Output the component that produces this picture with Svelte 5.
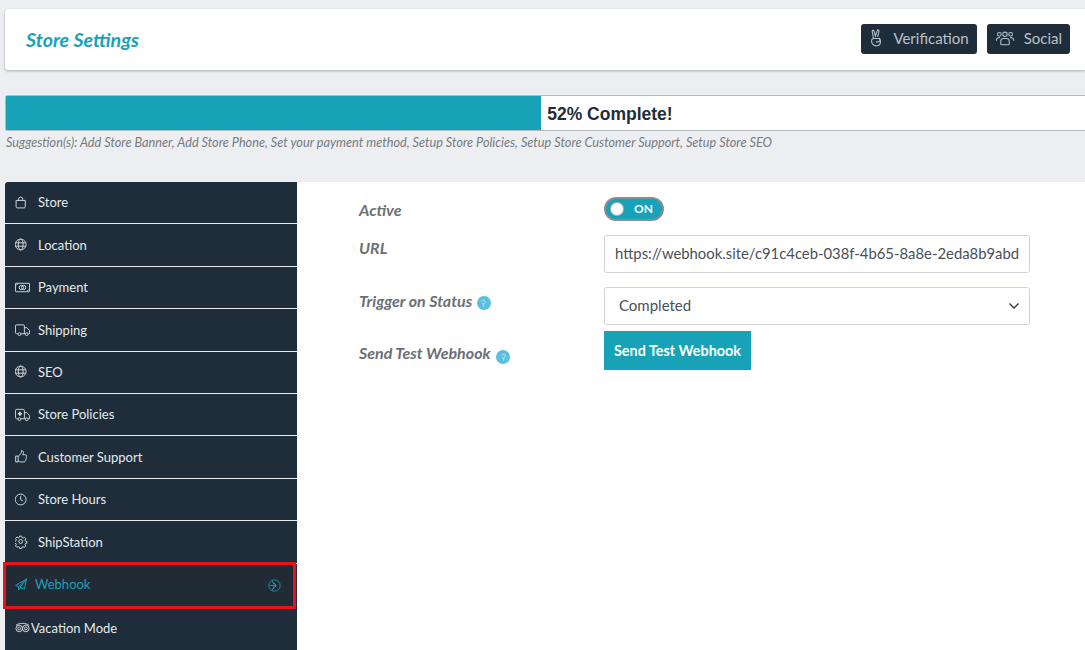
<script>
  const menu = [
    { name: "Store", icon: "bag", small: true },
    { name: "Location", icon: "globe", small: true },
    { name: "Payment", icon: "money" },
    { name: "Shipping", icon: "truck" },
    { name: "SEO", icon: "globe", small: true },
    { name: "Store Policies", icon: "ambulance" },
    { name: "Customer Support", icon: "thumb", small: true },
    { name: "Store Hours", icon: "clock", small: true },
    { name: "ShipStation", icon: "gear", small: true },
    { name: "Webhook", icon: "plane", small: true, active: true },
    { name: "Vacation Mode", icon: "trip", tight: true }
  ];
</script>

{#snippet icon(name, small)}
  <svg
    class="ico"
    viewBox={small ? "1.2 -1 18 18" : "0 0 16 16"}
    preserveAspectRatio="xMinYMid"
    fill="none"
    stroke="currentColor"
    stroke-width={small ? 1.15 : 1}
  >
    {#if name === "bag"}
      <path d="M2.5 5.5h11v7.5a1.5 1.5 0 0 1-1.5 1.5H4a1.500 1.500 0 0 1-1.500-1.500z" />
      <path d="M5.500 5.500V4a2.500 2.500 0 0 1 5 0v1.500" />
    {:else if name === "globe"}
      <circle cx="8" cy="8" r="6.500" />
      <ellipse cx="8" cy="8" rx="2.900" ry="6.500" />
      <path d="M2 6h12M2 10h12" />
    {:else if name === "money"}
      <rect x="0.500" y="3.500" width="15" height="9" rx="0.500" />
      <circle cx="6.800" cy="8" r="2.300" />
      <circle cx="9.200" cy="8" r="2.300" />
      <path d="M1 6l2-2M15 10l-2 2" />
    {:else if name === "truck"}
      <path d="M3 12.500H1.800A1.300 1.300 0 0 1 .5 11.200V4.300A1.300 1.300 0 0 1 1.800 3h7A1.300 1.300 0 0 1 10 4.300v8.200H6.500" />
      <path d="M10 6h2.500l3 3v3.500h-1.200M10 12.500h.8" />
      <circle cx="4.800" cy="13" r="1.500" />
      <circle cx="12.500" cy="13" r="1.500" />
    {:else if name === "ambulance"}
      <path d="M3 12.500H1.800A1.300 1.300 0 0 1 .5 11.200V3.800A1.300 1.300 0 0 1 1.800 2.500h7A1.300 1.300 0 0 1 10 3.800v8.700H6.500" />
      <path d="M10 6h2.500l3 3v3.500h-1.200M10 12.500h.8" />
      <circle cx="4.800" cy="13" r="1.500" />
      <circle cx="12.500" cy="13" r="1.500" />
      <path d="M5.200 5v4.400M3 7.200h4.400" stroke-width="1.800" />
    {:else if name === "thumb"}
      <path d="M2 7.500h3v7H2z" />
      <path d="M5 8l3-3.500c.8-1 1-2 1-3.500 1.500 0 2.300 1 2.300 2.300 0 1-.5 2-.8 2.700h3.300c1.500 0 1.800 1.700.8 2.500.6.800.4 1.800-.3 2.300.3 1 0 1.800-.7 2.100.1 1.100-.6 1.600-1.600 1.600H8.500c-1.400 0-2.300-.5-3.500-1" />
    {:else if name === "clock"}
      <circle cx="8" cy="8" r="6.500" />
      <path d="M8 4v4.300l2.700 1.500" />
    {:else if name === "gear"}
      <circle cx="8" cy="8" r="2.300" />
      <path d="M6.800 1.500h2.400l.4 1.800 1.300.6 1.700-.9 1.600 1.700-1 1.600.5 1.300 1.800.4v2l-1.800.5-.5 1.300.9 1.600-1.600 1.700-1.600-.9-1.400.6-.3 1.700H6.800l-.4-1.800-1.300-.6-1.700.9-1.600-1.600 1-1.700-.5-1.300-1.800-.5V7.700l1.800-.4.5-1.300-.9-1.700 1.600-1.700 1.700.9 1.300-.6z" />
    {:else if name === "plane"}
      <path d="M15 1.500L2 9l3.500 1.500zM15 1.500l-8 10 5.500 2zM5.500 10.500v4L8 12" stroke-linejoin="round" />
    {:else if name === "trip"}
      <circle cx="4.500" cy="9" r="3.500" />
      <circle cx="11.500" cy="9" r="3.500" />
      <circle cx="4.500" cy="9" r="1.500" />
      <circle cx="11.500" cy="9" r="1.500" />
      <path d="M1 5.500c4-2.500 10-2.500 14 0" />
    {/if}
  </svg>
{/snippet}

{#snippet help()}
  <span class="help">
    <svg viewBox="0 0 16 16" fill="none" stroke="#cfeaf4" stroke-width="1.200">
      <path d="M5.500 7a2.500 2.500 0 1 1 4.500 1.500c-.7.7-1 1-1 2H7c0-1-.3-1.300-1-2" />
      <path d="M7 12h2M7.300 13.500h1.400" />
    </svg>
  </span>
{/snippet}

<div class="page">
  <header class="head">
    <h1>Store Settings</h1>
    <div class="head-btns">
      <button class="dark">
        <svg class="btn-ico narrow" viewBox="0 0 12 18" fill="none" stroke="currentColor" stroke-width="1.100">
          <path d="M3 9L1.700 2.500c-.2-1.300 1.500-1.500 1.800-.4L5 7 6.800 1.600c.4-1.200 2-.7 1.700.5L7.200 8" />
          <path d="M2.500 9.500h5.300c1.500 0 2 1.500 1.200 2.500-.8 1-2.500 1-3.500.5M2.500 9.500c-1.800.8-1.700 3.300-.8 5 .8 1.500 2.500 2.500 4.500 2.300 2-.2 3.800-2 3.800-4.300 0-1-.3-2.500-1.300-3.500" />
        </svg>
        Verification
      </button>
      <button class="dark">
        <svg class="btn-ico" viewBox="0 0 20 16" fill="none" stroke="currentColor" stroke-width="1.100">
          <circle cx="4" cy="3.500" r="2" />
          <circle cx="10" cy="3.500" r="2.300" />
          <circle cx="16" cy="3.500" r="2" />
          <path d="M.7 10.500c0-2 1-3.200 2.500-3.200h1.500M19.300 10.500c0-2-1-3.200-2.500-3.200h-1.500" />
          <path d="M5.500 13.800V11c0-1.800 1.200-3 2.800-3h3.400c1.600 0 2.800 1.200 2.800 3v2.800c0 .5-.3.800-.8.800H6.300c-.5 0-.8-.3-.8-.8z" />
        </svg>
        Social
      </button>
    </div>
  </header>

  <section class="progress">
    <div class="bar" style="width: 49.600%"></div>
    <span class="pct">52% Complete!</span>
  </section>
  <p class="hint">Suggestion(s): Add Store Banner, Add Store Phone, Set your payment method, Setup Store Policies, Setup Store Customer Support, Setup Store SEO</p>

  <div class="main">
    <nav class="side">
      {#each menu as item}
        <a class="item" class:active={item.active} class:tight={item.tight} href="#top">
          {@render icon(item.icon, item.small)}
          <span>{item.name}</span>
          {#if item.active}
            <svg class="arrow" viewBox="0 0 16 16" fill="none" stroke="currentColor" stroke-width="1">
              <circle cx="8" cy="8" r="7" />
              <path d="M2 8h8M7 4.500L10.500 8 7 11.500M5 2l3 6M5 14l3-6" />
            </svg>
          {/if}
        </a>
      {/each}
    </nav>

    <div class="content">
      <div class="row r-active">
        <span class="label">Active</span>
        <div class="toggle">
          <span class="knob"></span>
          <span class="on">ON</span>
        </div>
      </div>
      <div class="row r-url">
        <span class="label">URL</span>
        <input class="field" type="text" value="https://webhook.site/c91c4ceb-038f-4b65-8a8e-2eda8b9abd1f" />
      </div>
      <div class="row r-status">
        <span class="label">Trigger on Status {@render help()}</span>
        <div class="select-wrap">
          <select class="field sel">
            <option>Completed</option>
          </select>
          <svg class="chev" viewBox="0 0 12 8" fill="none" stroke="#343a40" stroke-width="1.400">
            <path d="M1.500 1.500L6 6l4.500-4.500" />
          </svg>
        </div>
      </div>
      <div class="row r-test">
        <span class="label">Send Test Webhook {@render help()}</span>
        <button class="send">Send Test Webhook</button>
      </div>
    </div>
  </div>
</div>

<style>
  :global(body) {
    margin: 0;
    background: #eceef2;
    overflow: hidden;
  }

  .page {
    width: 1085px;
    height: 650px;
    overflow: hidden;
    font-family: Lato, "Liberation Sans", sans-serif;
    padding: 9px 0 0 5px;
    box-sizing: border-box;
  }

  .head {
    height: 61px;
    background: #fff;
    border-radius: 3px 0 0 3px;
    box-shadow: 0 1px 3px rgba(0, 0, 0, 0.28);
    display: flex;
    align-items: center;
    justify-content: space-between;
    padding: 0 15px 0 21px;
  }

  h1 {
    margin: 0;
    font-size: 19.6px;
    font-style: italic;
    font-weight: 700;
    color: #17a2b8;
  }

  .head-btns {
    display: flex;
    gap: 10px;
    margin-top: -1px;
  }

  .dark {
    height: 30px;
    padding: 0 8px 2px;
    border: 0;
    border-radius: 3px;
    background: #1f2d3a;
    color: #b8c2cb;
    font: 15px Lato, "Liberation Sans", sans-serif;
    display: flex;
    align-items: center;
    gap: 9px;
  }

  .btn-ico {
    width: 20px;
    height: 15px;
  }

  .btn-ico.narrow {
    width: 13px;
    height: 18px;
    margin: 0 1px;
  }

  .progress {
    margin-top: 25px;
    height: 36px;
    background: #fff;
    border: 1px solid #b5b9bd;
    border-right: 0;
    border-radius: 3px 0 0 3px;
    box-sizing: border-box;
    display: flex;
    align-items: center;
  }

  .bar {
    height: 100%;
    background: #17a2b8;
  }

  .pct {
    margin: 3px 0 0 6px;
    font: 700 17.5px "Liberation Sans", Arial, sans-serif;
    color: #1f2d3a;
  }

  .hint {
    margin: 4px 0 0 1px;
    font-size: 12.7px;
    line-height: 14px;
    font-style: italic;
    color: #767b80;
    white-space: nowrap;
  }

  .main {
    margin-top: 33px;
    display: flex;
    height: 468px;
    background: #fff;
  }

  .side {
    width: 292px;
    flex: none;
    background: #1f2d3a;
    border-radius: 3px 0 0 0;
  }

  .item {
    height: 42.4px;
    box-sizing: border-box;
    border-bottom: 1px solid #e9ecef;
    display: flex;
    align-items: center;
    padding: 0 0 0.6px 10px;
    color: #e5e9ec;
    font-size: 13px;
    text-decoration: none;
  }

  .item .ico {
    width: 15px;
    height: 15px;
    flex: none;
    margin-right: 8px;
    color: #d5dadf;
  }

  .item.active {
    color: #17a2b8;
    border-bottom: 0;
    outline: 3px solid #e8121c;
    outline-offset: -2px;
    margin-right: 2px;
    margin-left: -1px;
    padding: 0 0 2px 11px;
    height: 45px;
    margin-top: -1px;
    margin-bottom: -1px;
    position: relative;
    background: #212b36;
  }

  .item.active .ico {
    color: #17a2b8;
    margin-right: 5px;
  }

  .item.tight {
    border-bottom: 0;
    padding-top: 1px;
  }

  .item.tight .ico {
    margin-right: 1px;
  }

  .arrow {
    width: 13px;
    height: 13px;
    margin-left: auto;
    margin-right: 14px;
    margin-top: 2px;
  }

  .content {
    flex: 1;
    position: relative;
    padding-left: 62px;
  }

  .row {
    display: flex;
  }

  .label {
    width: 245px;
    flex: none;
    font-size: 16px;
    font-style: italic;
    font-weight: 700;
    color: #6b6f73;
    white-space: nowrap;
  }

  .r-active {
    height: 53px;
  }

  .r-active .label {
    padding-top: 18px;
  }

  .r-url {
    height: 52px;
  }

  .r-url .label {
    padding-top: 3px;
  }

  .r-status {
    height: 44px;
  }

  .r-status .label {
    padding-top: 4px;
  }

  .r-test .label {
    padding-top: 12px;
  }

  .toggle {
    width: 56px;
    height: 20px;
    border-radius: 12px;
    background: #17a2b8;
    border: 2px solid #868e96;
    margin-top: 15px;
    display: flex;
    align-items: center;
  }

  .knob {
    width: 12px;
    height: 12px;
    border-radius: 50%;
    background: #fff;
    box-shadow: 0 0 0 1px #adb5bd;
    margin-left: 5px;
  }

  .on {
    margin: -1px 0 0 11px;
    color: #fff;
    font-size: 12px;
    font-weight: 700;
  }

  .field {
    width: 426px;
    height: 38px;
    box-sizing: border-box;
    border: 1px solid #ced4da;
    border-radius: 3px;
    background: #fff;
    padding: 0 10px 2px;
    font: 14.85px Lato, "Liberation Sans", sans-serif;
    color: #495057;
    margin: 0;
    outline: none;
    display: block;
  }

  .select-wrap {
    position: relative;
    width: 426px;
  }

  .sel {
    appearance: none;
    padding-left: 14px;
    font-size: 15px;
  }

  .chev {
    position: absolute;
    right: 10px;
    top: 15px;
    width: 12px;
    height: 8px;
  }

  .send {
    height: 39px;
    width: 147px;
    padding: 0;
    border: 0;
    background: #17a2b8;
    color: #fff;
    font: 700 14.4px Lato, "Liberation Sans", sans-serif;
  }

  .help {
    display: inline-flex;
    width: 14px;
    height: 14px;
    border-radius: 50%;
    background: #5bc0de;
    vertical-align: -1px;
    margin-left: 1px;
    align-items: center;
    justify-content: center;
  }

  .r-test .help {
    vertical-align: -3px;
    margin-left: 2px;
  }

  .help svg {
    width: 11px;
    height: 11px;
  }
</style>
